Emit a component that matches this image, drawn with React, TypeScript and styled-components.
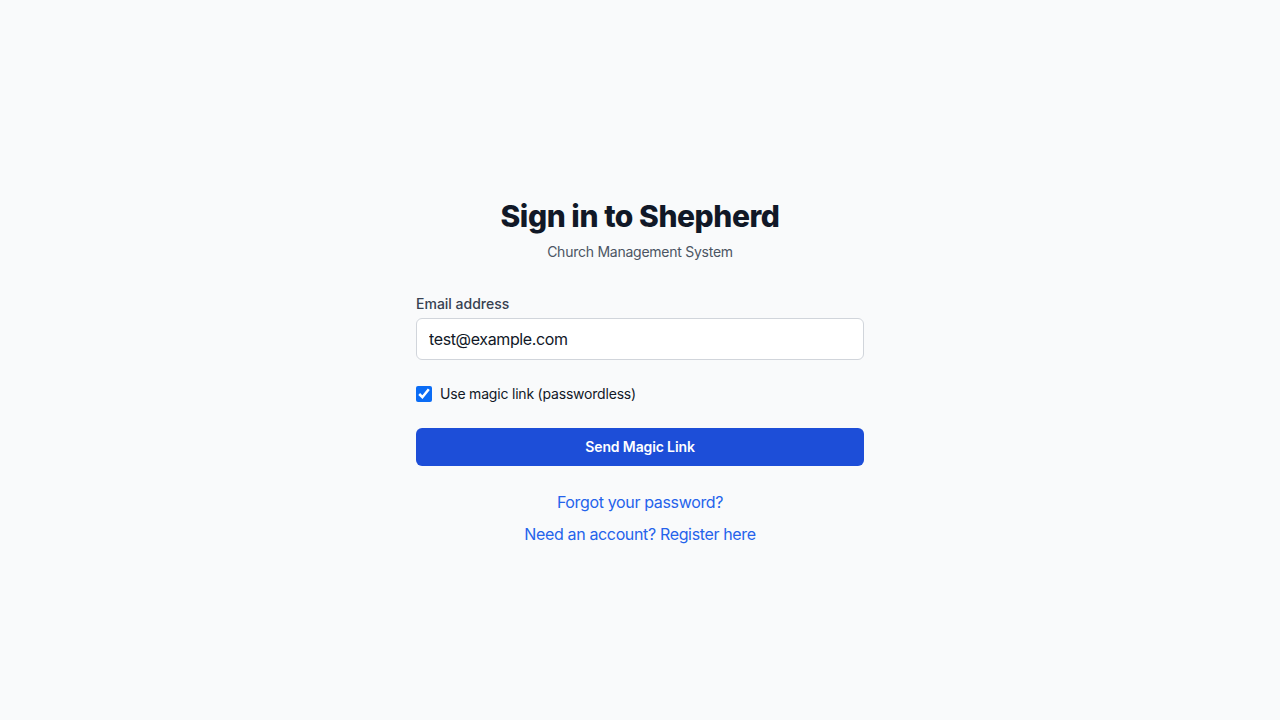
import React from "react";
import styled, { createGlobalStyle } from "styled-components";

const Global = createGlobalStyle`
  * { box-sizing: border-box; }
  html, body { margin: 0; padding: 0; }
  body {
    background: #f9fafb;
    font-family: Inter, "Noto Sans", sans-serif;
    -webkit-font-smoothing: antialiased;
  }
`;

const Page = styled.main`
  min-height: 100vh;
  display: flex;
  flex-direction: column;
  align-items: center;
  justify-content: center;
  padding-top: 24px;
`;

const Card = styled.div`
  width: 448px;
  display: flex;
  flex-direction: column;
`;

const Title = styled.h1`
  margin: 0;
  text-align: center;
  font-size: 30px;
  line-height: 36px;
  font-weight: 800;
  color: #111827;
  letter-spacing: -0.45px;
`;

const Subtitle = styled.p`
  margin: 8px 0 0;
  text-align: center;
  font-size: 14px;
  line-height: 20px;
  color: #4b5563;
  letter-spacing: -0.25px;
`;

const Form = styled.form`
  margin-top: 32px;
  display: flex;
  flex-direction: column;
  gap: 24px;
`;

const Field = styled.div`
  display: flex;
  flex-direction: column;
  gap: 4px;
`;

const Label = styled.label`
  font-size: 14px;
  line-height: 20px;
  font-weight: 500;
  color: #374151;
`;

const Input = styled.input`
  height: 42px;
  width: 100%;
  border: 1px solid #d1d5db;
  border-radius: 6px;
  background: #fff;
  padding: 0 12px;
  font-family: inherit;
  font-size: 16px;
  color: #111827;
  letter-spacing: -0.37px;
  outline: none;
`;

const CheckRow = styled.label`
  display: flex;
  align-items: center;
  gap: 8px;
  height: 20px;
  font-size: 14px;
  line-height: 20px;
  color: #111827;
  letter-spacing: -0.2px;
`;

const Check = styled.input`
  width: 16px;
  height: 16px;
  margin: 0;
  accent-color: #0b6cf5;
`;

const Button = styled.button`
  height: 38px;
  width: 100%;
  border: none;
  border-radius: 6px;
  background: #1d4ed8;
  color: #fff;
  font-family: inherit;
  font-size: 14px;
  line-height: 20px;
  font-weight: 600;
  letter-spacing: -0.13px;
  padding: 0;
  cursor: pointer;
`;

const Links = styled.div`
  margin-top: 24px;
  display: flex;
  flex-direction: column;
  align-items: center;
  gap: 8px;
`;

const Link = styled.a`
  font-size: 16px;
  line-height: 24px;
  color: #2563eb;
  text-decoration: none;
  letter-spacing: -0.35px;
`;

export default function App() {
  return (
    <>
      <Global />
      <Page>
        <Card>
          <Title>Sign in to Shepherd</Title>
          <Subtitle>Church Management System</Subtitle>
          <Form onSubmit={(e) => e.preventDefault()}>
            <Field>
              <Label htmlFor="email">Email address</Label>
              <Input id="email" type="email" defaultValue="test@example.com" />
            </Field>
            <CheckRow>
              <Check type="checkbox" defaultChecked />
              Use magic link (passwordless)
            </CheckRow>
            <Button type="submit">Send Magic Link</Button>
          </Form>
          <Links>
            <Link href="#">Forgot your password?</Link>
            <Link href="#">Need an account? Register here</Link>
          </Links>
        </Card>
      </Page>
    </>
  );
}
